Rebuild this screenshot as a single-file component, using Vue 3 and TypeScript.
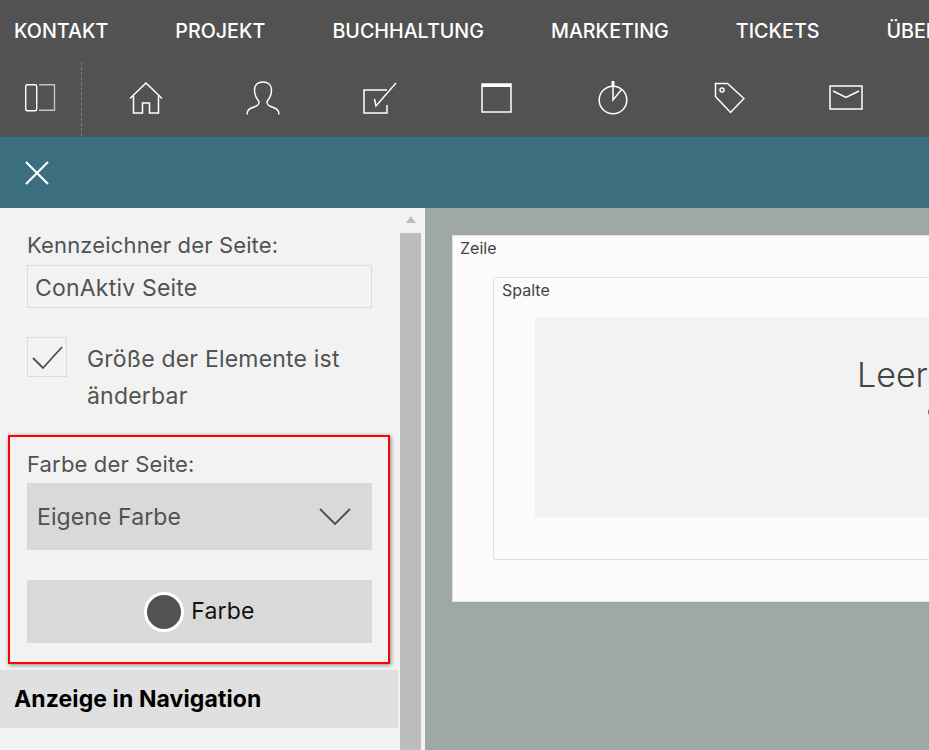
<script setup lang="ts">
const menu: string[] = ['KONTAKT', 'PROJEKT', 'BUCHHALTUNG', 'MARKETING', 'TICKETS', 'ÜBER']
</script>

<template>
  <div class="page">
    <header class="head">
      <nav class="menu">
        <a v-for="item in menu" :key="item" class="menu-item">{{ item }}</a>
      </nav>
      <div class="tools">
        <div class="toggle">
          <svg width="32" height="28" viewBox="0 0 32 28" fill="none">
            <rect x="1.7" y="0.7" width="11" height="26" rx="1.5" stroke="#fff" stroke-width="1.4" />
            <path d="M15 0.7H30.500V26.300H15" stroke="#b9c9c4" stroke-width="1.4" />
          </svg>
        </div>
        <div class="tool-icons">
          <span class="tool">
            <svg width="34" height="32" viewBox="0 0 34 32" fill="none" stroke="#fff" stroke-width="1.5">
              <path d="M1 16.500 17 1 33 16.500" />
              <path d="M4.500 14V31H13.500V21H20.500V31H29.500V14" />
            </svg>
          </span>
          <span class="tool">
            <svg width="34" height="34" viewBox="0 0 34 34" fill="none" stroke="#fff" stroke-width="1.5">
              <path d="M1 33.500C1 29 3.500 27.500 8 26 12.500 24.500 13 23 13 20.500 9.500 16.500 8.500 12 8.500 9 8.500 4 12 1 17 1S25.500 4 25.500 9C25.500 12 24.500 16.500 21 20.500 21 23 21.500 24.500 26 26 30.500 27.500 33 29 33 33.500" />
            </svg>
          </span>
          <span class="tool">
            <svg width="34" height="32" viewBox="0 0 34 32" fill="none" stroke="#fff" stroke-width="1.5">
              <path d="M24 8H1V31H24V23" />
              <path d="M11.500 17 13 24 33 1" />
            </svg>
          </span>
          <span class="tool">
            <svg width="31" height="30" viewBox="0 0 31 30" fill="none" stroke="#fff" stroke-width="1.5">
              <rect x="1" y="1" width="29" height="28" />
              <path d="M1 2.500H30" stroke-width="3" />
            </svg>
          </span>
          <span class="tool">
            <svg width="30" height="34" viewBox="0 0 30 34" fill="none" stroke="#fff" stroke-width="1.5">
              <circle cx="15" cy="19" r="13.800" />
              <path d="M15 0V5" stroke-width="3" />
              <path d="M15 5V19L24 8" />
            </svg>
          </span>
          <span class="tool">
            <svg width="31" height="32" viewBox="0 0 31 32" fill="none" stroke="#fff" stroke-width="1.5">
              <path d="M1.500 1.500H13.500L30 16.500 16.500 30.500 1.500 14.500Z" />
              <circle cx="8" cy="8" r="2" />
            </svg>
          </span>
          <span class="tool">
            <svg width="34" height="25" viewBox="0 0 34 25" fill="none" stroke="#fff" stroke-width="1.5">
              <rect x="1" y="1" width="32" height="23" />
              <path d="M4 6 17 12.500 30 6" />
            </svg>
          </span>
        </div>
      </div>
    </header>

    <div class="bar">
      <svg width="26" height="26" viewBox="0 0 26 26" stroke="#fff" stroke-width="2.2">
        <path d="M2 2 24 24M24 2 2 24" />
      </svg>
    </div>

    <main class="body">
      <aside class="side">
        <div class="side-scroll">
          <div class="fields">
            <label class="label">Kennzeichner der Seite:</label>
            <div class="input">ConAktiv Seite</div>
            <div class="check-row">
              <span class="check">
                <svg width="32" height="24" viewBox="0 0 32 24" fill="none" stroke="#4d4d4d" stroke-width="1.8">
                  <path d="M2 12 12 22 31 1" />
                </svg>
              </span>
              <span class="check-text">Größe der Elemente ist änderbar</span>
            </div>
            <label class="label color-label">Farbe der Seite:</label>
            <div class="select">
              <span>Eigene Farbe</span>
              <svg width="32" height="18" viewBox="0 0 32 18" fill="none" stroke="#4d4d4d" stroke-width="1.8">
                <path d="M1 1 16 16 31 1" />
              </svg>
            </div>
            <div class="color-btn">
              <span class="dot"></span>
              <span class="color-text">Farbe</span>
            </div>
          </div>
          <div class="section">Anzeige in Navigation</div>
        </div>
        <div class="scrollbar">
          <span class="arrow"></span>
          <span class="thumb"></span>
        </div>
      </aside>

      <section class="canvas">
        <div class="row-box">
          <div class="box-title">Zeile</div>
          <div class="col-box">
            <div class="box-title">Spalte</div>
            <div class="empty">
              <div class="empty-title">Leere Spalte</div>
              <span class="empty-add"></span>
            </div>
          </div>
        </div>
      </section>
    </main>

    <div class="highlight"></div>
  </div>
</template>

<style scoped>
.page {
  width: 929px;
  height: 750px;
  overflow: hidden;
  position: relative;
  font-family: Inter, "Liberation Sans", sans-serif;
  color: #525252;
}

.head {
  height: 136px;
  background: #525252;
  overflow: hidden;
}

.menu {
  display: flex;
  gap: 67px;
  padding: 19px 0 0 14px;
  height: 62px;
  box-sizing: border-box;
  white-space: nowrap;
}

.menu-item {
  color: #fff;
  font-size: 19.700px;
  font-weight: 500;
  line-height: 24px;
}

.tools {
  display: flex;
  height: 74px;
}

.toggle {
  width: 82px;
  box-sizing: border-box;
  border-right: 1px dashed #808080;
  padding: 22px 0 0 24px;
}

.tool-icons {
  display: grid;
  grid-template-columns: repeat(7, 116.700px);
  padding: 0 0 3px 6px;
}

.tool {
  display: flex;
  justify-content: center;
  align-items: center;
}

.bar {
  height: 72px;
  background: #3b6e7f;
  border-top: 1px solid #33616f;
  box-sizing: border-box;
  padding: 23px 0 0 24px;
}

.body {
  display: flex;
  height: 542px;
}

.side {
  width: 425px;
  flex: none;
  display: flex;
  background: #f2f2f2;
  padding-right: 4px;
  box-sizing: border-box;
}

.side-scroll {
  width: 400px;
  flex: none;
}

.fields {
  padding: 25px 28px 0 27px;
  height: 462px;
  box-sizing: border-box;
}

.label {
  display: block;
  font-size: 22px;
  letter-spacing: 0.15px;
  line-height: 24px;
}

.input {
  margin-top: 8px;
  height: 43px;
  border: 1px solid #dcdcdc;
  box-sizing: border-box;
  padding-left: 7px;
  font-size: 23px;
  letter-spacing: 0.2px;
  line-height: 44px;
}

.check-row {
  display: flex;
  margin-top: 29px;
  gap: 20px;
}

.check {
  width: 40px;
  height: 40px;
  flex: none;
  border: 1px solid #dcdcdc;
  box-sizing: border-box;
  padding: 8px 0 0 3px;
}

.check-text {
  font-size: 23px;
  letter-spacing: 0.2px;
  line-height: 37px;
  margin-top: 4px;
}

.color-label {
  margin-top: 37px;
}

.select {
  margin-top: 7px;
  height: 67px;
  background: #d9d9d9;
  display: flex;
  align-items: center;
  justify-content: space-between;
  padding: 0 21px 0 10px;
  font-size: 23px;
  letter-spacing: 0.1px;
}

.color-btn {
  margin-top: 30px;
  height: 63px;
  background: #d9d9d9;
  display: flex;
  align-items: center;
  justify-content: center;
  gap: 7px;
  font-size: 23px;
  letter-spacing: 0.2px;
  color: #111;
}

.color-text {
  margin-bottom: 2px;
}

.dot {
  width: 34px;
  height: 34px;
  border-radius: 50%;
  background: #525252;
  border: 3px solid #fff;
}

.section {
  width: 398px;
  height: 58px;
  background: #e0e0e0;
  padding-left: 14px;
  box-sizing: border-box;
  font-size: 23px;
  letter-spacing: 0.1px;
  font-weight: 700;
  line-height: 58px;
  color: #000;
}

.scrollbar {
  width: 21px;
  flex: none;
  background: #f2f2f2;
  display: flex;
  flex-direction: column;
  align-items: center;
}

.arrow {
  margin-top: 8px;
  width: 0;
  height: 0;
  border-left: 5px solid transparent;
  border-right: 5px solid transparent;
  border-bottom: 7px solid #bdbdbd;
}

.thumb {
  margin-top: 10px;
  flex: 1;
  width: 21px;
  background: #bdbdbd;
}

.canvas {
  flex: 1;
  background: #9ea9a6;
  padding: 27px 0 0 27px;
  overflow: hidden;
}

.row-box {
  width: 800px;
  height: 367px;
  background: #fbfbfb;
  border: 1px solid #e2e2e2;
  box-sizing: border-box;
  padding: 0 0 0 40px;
}

.box-title {
  font-size: 16px;
  line-height: 25px;
  color: #444;
  margin-left: -33px;
}

.col-box {
  margin-top: 16px;
  width: 700px;
  height: 283px;
  border: 1px solid #e0e0e0;
  border-radius: 2px;
  box-sizing: border-box;
  padding: 0 0 0 41px;
}

.col-box .box-title {
  margin-left: -33px;
}

.empty {
  margin-top: 15px;
  height: 200px;
  width: 640px;
  background: #f2f2f2;
  padding: 35px 0 0 322px;
  box-sizing: border-box;
}

.empty-title {
  font-size: 34px;
  font-weight: 300;
  line-height: 44px;
  color: #444;
  white-space: nowrap;
}

.empty-add {
  display: block;
  margin: 9px 0 0 71px;
  width: 12px;
  height: 12px;
  border: 2px solid #b55a1e;
  border-radius: 50%;
  box-sizing: border-box;
}

.highlight {
  position: absolute;
  left: 8px;
  top: 435px;
  width: 382px;
  height: 229px;
  box-sizing: border-box;
  border: 2px solid #f00;
  box-shadow: 1px 1px 4px rgba(0, 0, 0, 0.45);
}
</style>

<style>
html,
body {
  margin: 0;
  overflow: hidden;
}
</style>
